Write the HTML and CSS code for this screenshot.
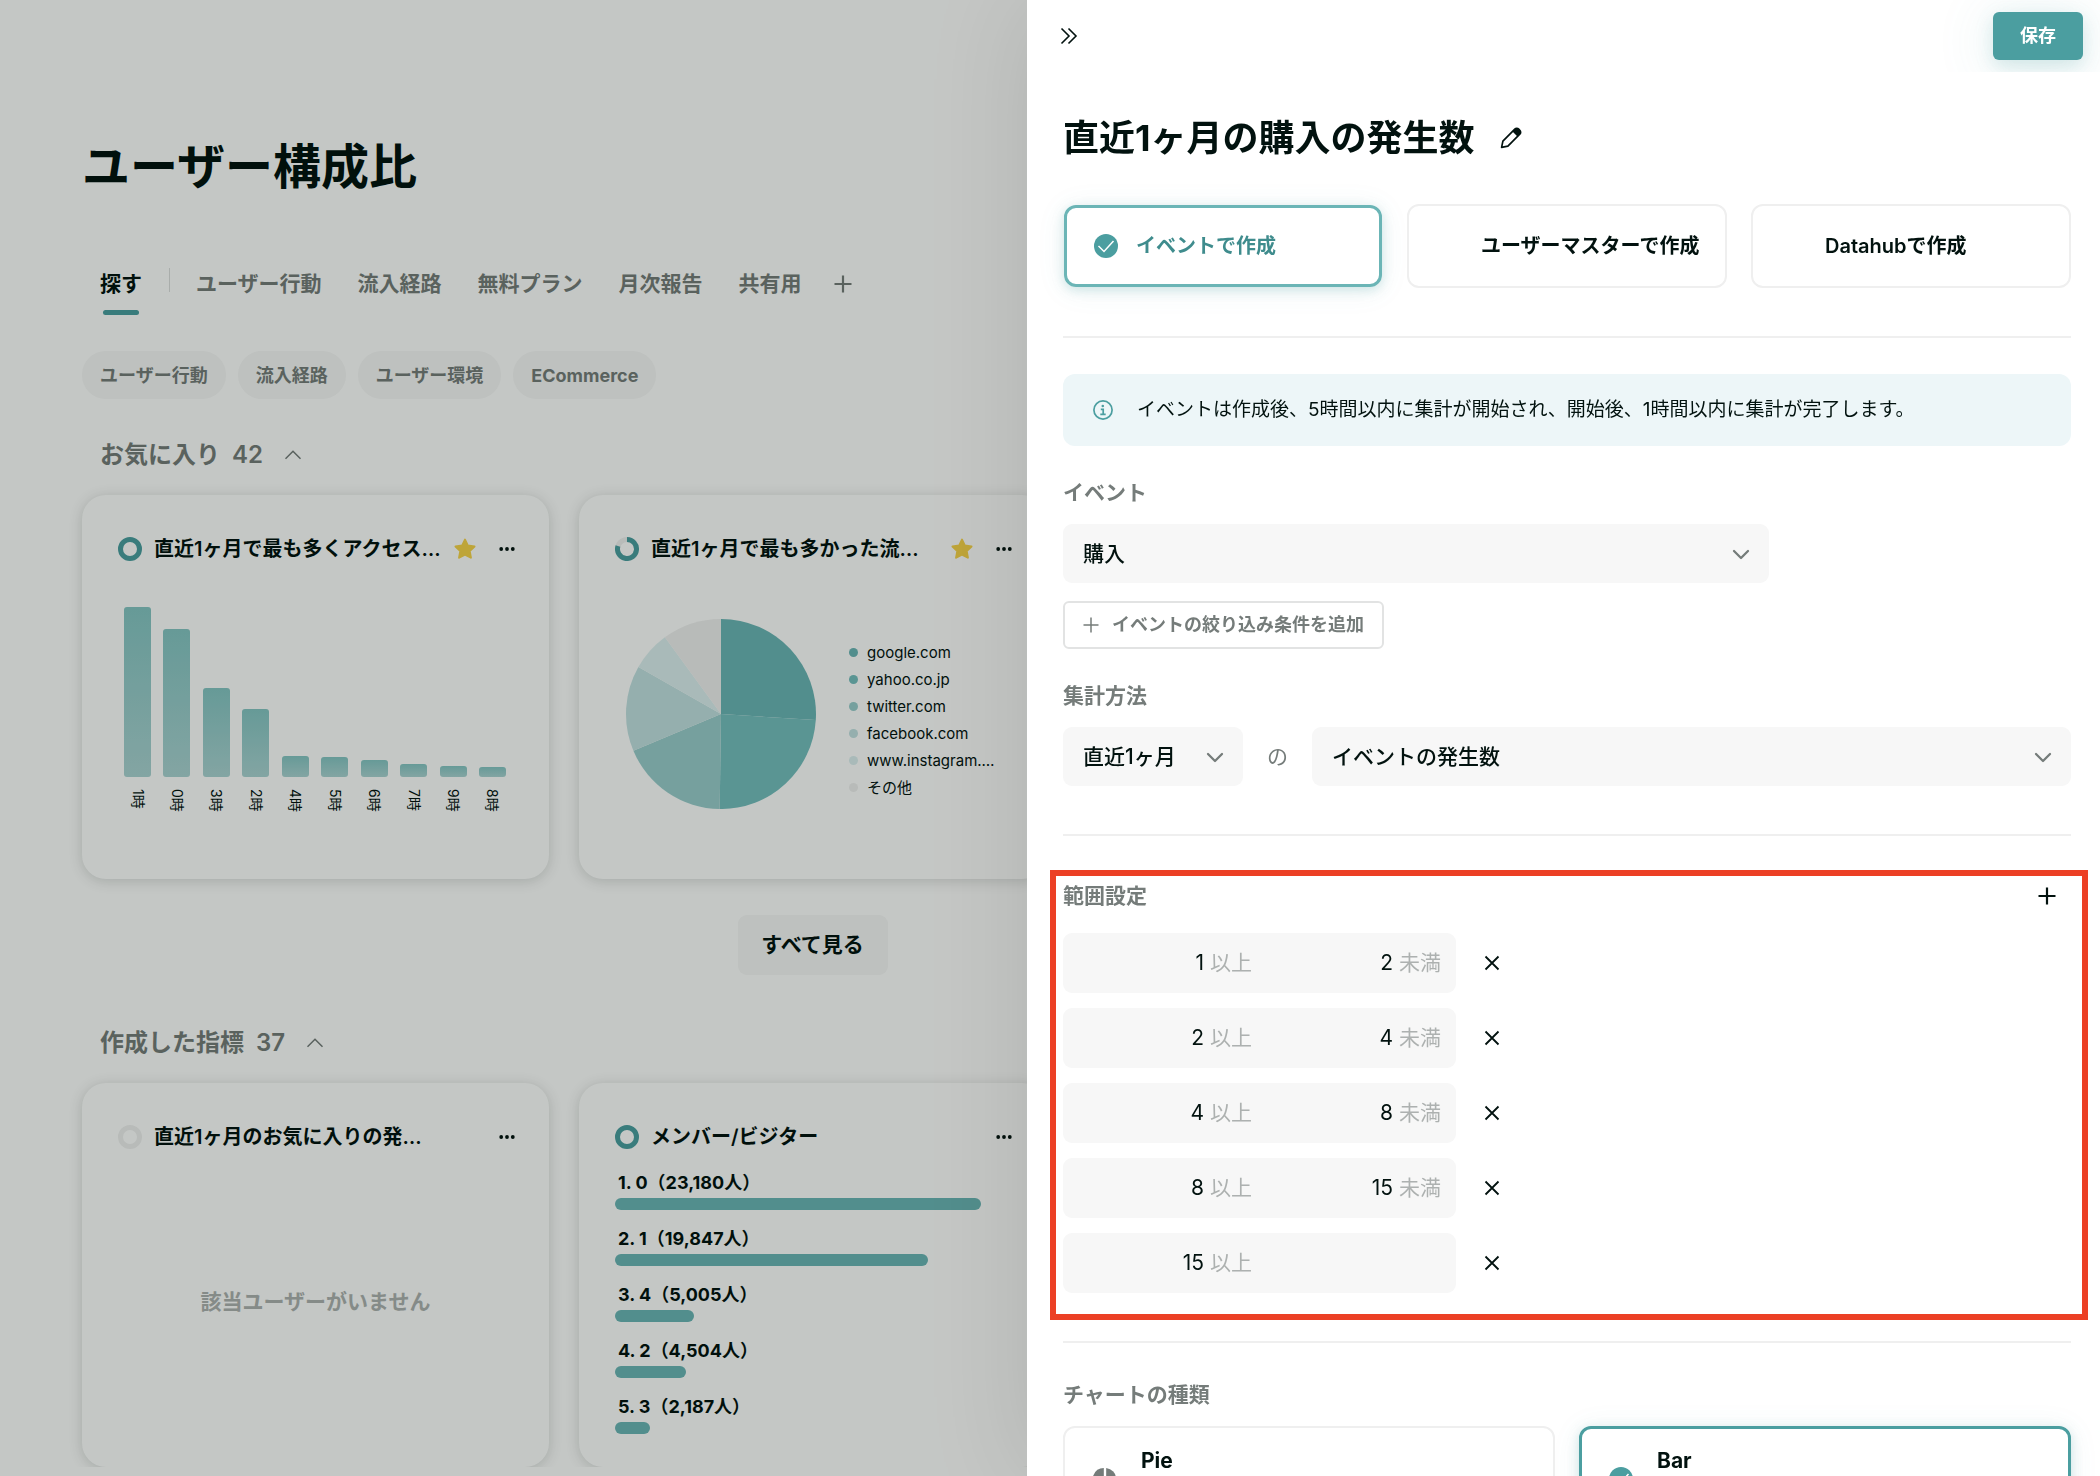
FILE: index.html
```html
<!DOCTYPE html>
<html lang="ja">
<head>
<meta charset="utf-8">
<meta name="viewport" content="width=device-width, initial-scale=1">
<title>ユーザー構成比</title>
<link rel="stylesheet" href="styles.css">
</head>
<body>
<svg class="sprite" aria-hidden="true">
  <symbol id="i-up" viewBox="0 0 24 24"><path d="M4.500 15.800 12 8.300l7.500 7.500" fill="none" stroke="currentColor" stroke-width="1.500"/></symbol>
  <symbol id="i-down" viewBox="0 0 24 24"><path d="M5 9l7 7 7-7" fill="none" stroke="currentColor" stroke-width="2.300" stroke-linecap="round" stroke-linejoin="round"/></symbol>
  <symbol id="i-plus" viewBox="0 0 24 24"><path d="M12 3.500v17M3.500 12h17" fill="none" stroke="currentColor" stroke-width="2.200"/></symbol>
  <symbol id="i-plus-thin" viewBox="0 0 24 24"><path d="M12 4.500v15M4.500 12h15" fill="none" stroke="currentColor" stroke-width="1.500"/></symbol>
  <symbol id="i-close" viewBox="0 0 24 24"><path d="M5.500 5.500l13 13M18.500 5.500l-13 13" fill="none" stroke="currentColor" stroke-width="1.800"/></symbol>
  <symbol id="i-star" viewBox="0 0 24 24"><path d="M12 2.600l2.900 6 6.600.9-4.800 4.600 1.200 6.600L12 17.500l-5.900 3.200 1.200-6.600L2.500 9.500l6.600-.9z" fill="currentColor" stroke="currentColor" stroke-width="2" stroke-linejoin="round"/></symbol>
  <symbol id="i-more" viewBox="0 0 24 24"><g fill="currentColor"><circle cx="6.200" cy="12" r="1.900"/><circle cx="12" cy="12" r="1.900"/><circle cx="17.800" cy="12" r="1.900"/></g></symbol>
  <symbol id="i-check" viewBox="0 0 24 24"><circle cx="12" cy="12" r="12" fill="#4b9ea0"/><path d="M4.500 12l5.500 5.500L19.500 7" fill="none" stroke="#fff" stroke-width="1.500"/></symbol>
</svg>

<main class="page">
  <h1 class="page__title">ユーザー構成比</h1>

  <nav class="tabs">
    <a class="tab tab--active" href="#">探す</a>
    <span class="tabs__divider"></span>
    <div class="tabs__group">
      <a class="tab" href="#">ユーザー行動</a>
      <a class="tab" href="#">流入経路</a>
      <a class="tab" href="#">無料プラン</a>
      <a class="tab" href="#">月次報告</a>
      <a class="tab" href="#">共有用</a>
    </div>
    <button class="icon-button tabs__add" type="button"><svg class="icon"><use href="#i-plus"/></svg></button>
  </nav>

  <div class="chips">
    <button class="chip" type="button">ユーザー行動</button>
    <button class="chip" type="button">流入経路</button>
    <button class="chip" type="button">ユーザー環境</button>
    <button class="chip" type="button">ECommerce</button>
  </div>

  <section class="section">
    <h2 class="section__title"><span>お気に入り</span><span>42</span><svg class="icon section__toggle"><use href="#i-up"/></svg></h2>
    <div class="cards">
      <article class="card">
        <header class="card__header">
          <svg class="icon" viewBox="0 0 24 24"><circle cx="12" cy="12" r="9.500" fill="none" stroke="#4b9ea0" stroke-width="5"/></svg>
          <h3 class="card__title">直近1ヶ月で最も多くアクセス…</h3>
          <button class="icon-button icon-button--star" type="button"><svg class="icon"><use href="#i-star"/></svg></button>
          <button class="icon-button" type="button"><svg class="icon"><use href="#i-more"/></svg></button>
        </header>
        <ol class="bars">
          <li class="bars__item"><span class="bars__bar" style="height:170px"></span><span class="bars__label">1時</span></li>
          <li class="bars__item"><span class="bars__bar" style="height:148px"></span><span class="bars__label">0時</span></li>
          <li class="bars__item"><span class="bars__bar" style="height:89px"></span><span class="bars__label">3時</span></li>
          <li class="bars__item"><span class="bars__bar" style="height:68px"></span><span class="bars__label">2時</span></li>
          <li class="bars__item"><span class="bars__bar" style="height:21px"></span><span class="bars__label">4時</span></li>
          <li class="bars__item"><span class="bars__bar" style="height:20px"></span><span class="bars__label">5時</span></li>
          <li class="bars__item"><span class="bars__bar" style="height:17px"></span><span class="bars__label">6時</span></li>
          <li class="bars__item"><span class="bars__bar" style="height:13px"></span><span class="bars__label">7時</span></li>
          <li class="bars__item"><span class="bars__bar" style="height:11px"></span><span class="bars__label">9時</span></li>
          <li class="bars__item"><span class="bars__bar" style="height:10px"></span><span class="bars__label">8時</span></li>
        </ol>
      </article>

      <article class="card">
        <header class="card__header">
          <svg class="icon" viewBox="0 0 24 24"><circle cx="12" cy="12" r="9.500" fill="none" stroke="#f0f0f0" stroke-width="5"/><path d="M12 2.500A9.500 9.500 0 1 1 2.960 9.060" fill="none" stroke="#4b9ea0" stroke-width="5"/></svg>
          <h3 class="card__title">直近1ヶ月で最も多かった流…</h3>
          <button class="icon-button icon-button--star" type="button"><svg class="icon"><use href="#i-star"/></svg></button>
          <button class="icon-button" type="button"><svg class="icon"><use href="#i-more"/></svg></button>
        </header>
        <div class="pie">
          <svg class="pie__chart" viewBox="0 0 190 190">
            <path fill="#6bb5b6" d="M95 95V0A95 95 0 0 1 189.800 101.100z"/>
            <path fill="#75bebf" d="M95 95L189.800 101.100A95 95 0 0 1 93.700 190z"/>
            <path fill="#9acdcd" d="M95 95L93.700 190A95 95 0 0 1 7.400 131.700z"/>
            <path fill="#c2e0e1" d="M95 95L7.400 131.700A95 95 0 0 1 12.400 48.100z"/>
            <path fill="#dceff0" d="M95 95L12.400 48.100A95 95 0 0 1 38.900 18.300z"/>
            <path fill="#f0f0f0" d="M95 95L38.900 18.300A95 95 0 0 1 95 0z"/>
          </svg>
          <ul class="legend">
            <li class="legend__item legend__item--1"><span class="legend__text">google.com</span></li>
            <li class="legend__item legend__item--2"><span class="legend__text">yahoo.co.jp</span></li>
            <li class="legend__item legend__item--3"><span class="legend__text">twitter.com</span></li>
            <li class="legend__item legend__item--4"><span class="legend__text">facebook.com</span></li>
            <li class="legend__item legend__item--5"><span class="legend__text">www.instagram.…</span></li>
            <li class="legend__item legend__item--6"><span class="legend__text">その他</span></li>
          </ul>
        </div>
      </article>
    </div>
    <button class="show-all" type="button">すべて見る</button>
  </section>

  <section class="section section--created">
    <h2 class="section__title"><span>作成した指標</span><span>37</span><svg class="icon section__toggle"><use href="#i-up"/></svg></h2>
    <div class="cards">
      <article class="card">
        <header class="card__header">
          <svg class="icon" viewBox="0 0 24 24"><circle cx="12" cy="12" r="9.500" fill="none" stroke="#f0f0f0" stroke-width="5"/></svg>
          <h3 class="card__title">直近1ヶ月のお気に入りの発…</h3>
          <button class="icon-button" type="button"><svg class="icon"><use href="#i-more"/></svg></button>
        </header>
        <p class="card__empty">該当ユーザーがいません</p>
      </article>

      <article class="card">
        <header class="card__header">
          <svg class="icon" viewBox="0 0 24 24"><circle cx="12" cy="12" r="9.500" fill="none" stroke="#4b9ea0" stroke-width="5"/></svg>
          <h3 class="card__title">メンバー/ビジター</h3>
          <button class="icon-button" type="button"><svg class="icon"><use href="#i-more"/></svg></button>
        </header>
        <ul class="ranking">
          <li class="ranking__item"><span class="ranking__label">1. 0（23,180人）</span><span class="ranking__bar" style="width:366px"></span></li>
          <li class="ranking__item"><span class="ranking__label">2. 1（19,847人）</span><span class="ranking__bar" style="width:313px"></span></li>
          <li class="ranking__item"><span class="ranking__label">3. 4（5,005人）</span><span class="ranking__bar" style="width:79px"></span></li>
          <li class="ranking__item"><span class="ranking__label">4. 2（4,504人）</span><span class="ranking__bar" style="width:71px"></span></li>
          <li class="ranking__item"><span class="ranking__label">5. 3（2,187人）</span><span class="ranking__bar" style="width:35px"></span></li>
        </ul>
      </article>
    </div>
  </section>
</main>

<div class="mask"></div>

<aside class="panel">
  <header class="panel__header">
    <button class="icon-button" type="button"><svg class="icon" viewBox="0 0 24 24"><path d="M4.500 4.500l7.500 7.500-7.500 7.500M11.500 4.500l7.500 7.500-7.500 7.500" fill="none" stroke="currentColor" stroke-width="1.600"/></svg></button>
    <button class="save" type="submit" form="metric">保存</button>
  </header>

  <form class="panel__body" id="metric">
    <div class="heading">
      <h2 class="heading__text">直近1ヶ月の購入の発生数</h2>
      <button class="icon-button" type="button"><svg class="icon" viewBox="0 0 24 24"><path d="M2.600 21.400l1.300-6.300L15.800 3.200a2.700 2.700 0 0 1 3.900 0l1.100 1.100a2.700 2.700 0 0 1 0 3.900L8.900 20.100z" fill="none" stroke="currentColor" stroke-width="1.700" stroke-linejoin="round"/><path d="M13.500 5.500l2.600-2.600c1-1 2.700-1 3.700 0l1.300 1.300c1 1 1 2.700 0 3.700l-2.600 2.600z" fill="currentColor"/></svg></button>
    </div>

    <div class="sources">
      <label class="option option--selected"><input class="option__input" type="radio" name="source" checked><svg class="icon"><use href="#i-check"/></svg><span>イベントで作成</span></label>
      <label class="option"><input class="option__input" type="radio" name="source"><span class="option__blank"></span><span>ユーザーマスターで作成</span></label>
      <label class="option"><input class="option__input" type="radio" name="source"><span class="option__blank"></span><span>Datahubで作成</span></label>
    </div>

    <hr class="rule">

    <p class="notice">
      <svg class="notice__icon" viewBox="0 0 20 20"><circle cx="10" cy="10" r="9.100" fill="none" stroke="currentColor" stroke-width="1.700"/><circle cx="9.800" cy="6" r="1.300" fill="currentColor"/><path d="M7.800 9.300h2.400v5M7.300 14.400h5.400" fill="none" stroke="currentColor" stroke-width="1.700"/></svg>
      <span>イベントは作成後、5時間以内に集計が開始され、開始後、1時間以内に集計が完了します。</span>
    </p>

    <label class="label" for="event">イベント</label>
    <div class="select select--event">
      <select class="select__field" id="event"><option>購入</option></select>
      <svg class="icon select__arrow"><use href="#i-down"/></svg>
    </div>
    <button class="add-filter" type="button"><svg class="icon"><use href="#i-plus-thin"/></svg>イベントの絞り込み条件を追加</button>

    <label class="label" for="period">集計方法</label>
    <div class="method">
      <div class="select select--period">
        <select class="select__field" id="period"><option>直近1ヶ月</option></select>
        <svg class="icon select__arrow"><use href="#i-down"/></svg>
      </div>
      <label class="method__joint" for="measure">の</label>
      <div class="select select--measure">
        <select class="select__field" id="measure"><option>イベントの発生数</option></select>
        <svg class="icon select__arrow"><use href="#i-down"/></svg>
      </div>
    </div>

    <hr class="rule">

    <section class="ranges">
      <div class="ranges__header">
        <h3 class="label label--inline">範囲設定</h3>
        <button class="icon-button" type="button"><svg class="icon"><use href="#i-plus"/></svg></button>
      </div>
      <div class="ranges__list">
        <div class="range">
          <div class="range__box">
            <label class="range__bound"><input class="range__input" type="text" inputmode="numeric" value="1">以上</label>
            <label class="range__bound"><input class="range__input" type="text" inputmode="numeric" value="2">未満</label>
          </div>
          <button class="icon-button" type="button"><svg class="icon"><use href="#i-close"/></svg></button>
        </div>
        <div class="range">
          <div class="range__box">
            <label class="range__bound"><input class="range__input" type="text" inputmode="numeric" value="2">以上</label>
            <label class="range__bound"><input class="range__input" type="text" inputmode="numeric" value="4">未満</label>
          </div>
          <button class="icon-button" type="button"><svg class="icon"><use href="#i-close"/></svg></button>
        </div>
        <div class="range">
          <div class="range__box">
            <label class="range__bound"><input class="range__input" type="text" inputmode="numeric" value="4">以上</label>
            <label class="range__bound"><input class="range__input" type="text" inputmode="numeric" value="8">未満</label>
          </div>
          <button class="icon-button" type="button"><svg class="icon"><use href="#i-close"/></svg></button>
        </div>
        <div class="range">
          <div class="range__box">
            <label class="range__bound"><input class="range__input" type="text" inputmode="numeric" value="8">以上</label>
            <label class="range__bound"><input class="range__input" type="text" inputmode="numeric" value="15">未満</label>
          </div>
          <button class="icon-button" type="button"><svg class="icon"><use href="#i-close"/></svg></button>
        </div>
        <div class="range">
          <div class="range__box">
            <label class="range__bound"><input class="range__input" type="text" inputmode="numeric" value="15">以上</label>
          </div>
          <button class="icon-button" type="button"><svg class="icon"><use href="#i-close"/></svg></button>
        </div>
      </div>
    </section>

    <hr class="rule rule--ranges">

    <h3 class="label label--chart">チャートの種類</h3>
    <div class="charts">
      <label class="chart"><input class="option__input" type="radio" name="chart"><svg class="icon chart__icon" viewBox="0 0 24 24"><path d="M10.800 1v11.500l-8 8A11.500 11.500 0 0 1 10.800 1z" fill="currentColor"/><path d="M13.200 1a11 11 0 0 1 9.800 11H13.200z" fill="currentColor"/><path d="M4.500 22l8.300-7.600H23A11.500 11.500 0 0 1 4.500 22z" fill="currentColor"/></svg><span class="chart__name">Pie</span></label>
      <label class="chart chart--selected"><input class="option__input" type="radio" name="chart" checked><svg class="icon chart__icon"><use href="#i-check"/></svg><span class="chart__name">Bar</span></label>
    </div>
  </form>
</aside>
</body>
</html>
```

FILE: styles.css
```css
:root {
  --ink: #02120f;
  --gray: #757c7a;
  --light: #adb1b0;
  --line: #efefef;
  --fill: #f7f7f7;
  --teal: #4b9ea0;
  --teal-soft: #6bb5b6;
}

* {
  box-sizing: border-box;
}

body {
  margin: 0;
  background: #fff;
  color: var(--ink);
  font-family: Inter, "Noto Sans CJK JP", sans-serif;
  font-size: 21px;
  line-height: 30px;
}

h1, h2, h3, p, ul, ol {
  margin: 0;
  padding: 0;
  font-weight: 600;
  list-style: none;
}

button, select, input {
  border: 0;
  margin: 0;
  padding: 0;
  background: none;
  color: inherit;
  font: inherit;
}

.sprite {
  position: absolute;
  width: 0;
  height: 0;
}

.icon {
  display: block;
  flex: none;
  width: 24px;
  height: 24px;
}

.icon-button {
  flex: none;
  width: 24px;
  height: 24px;
}

.icon-button--star {
  color: #f7d34a;
}

/* Page behind the panel */

.page {
  max-width: 1543px;
  padding: 137px 0 0 82px;
}

.page__title {
  font-size: 48px;
  font-weight: 700;
  line-height: 60px;
}

.tabs {
  display: flex;
  align-items: flex-start;
  gap: 27px;
  margin-top: 71px;
  padding-left: 18px;
  color: var(--gray);
}

.tabs__group {
  display: flex;
  gap: 36px;
  margin: 0 2px 0 -1px;
}

.tabs__divider {
  width: 1px;
  height: 24px;
  background: #dcdedd;
}

.tabs__add {
  margin-top: 4px;
}

.tab {
  display: flex;
  flex-direction: column;
  align-items: center;
  gap: 10px;
  color: inherit;
  font-weight: 600;
  line-height: 32px;
  text-decoration: none;
}

.tab--active {
  color: var(--ink);
}

.tab--active::after {
  content: "";
  width: 36px;
  height: 5px;
  border-radius: 3px;
  background: var(--teal);
}

.chips {
  display: flex;
  gap: 12px;
  margin-top: 36px;
}

.chip {
  height: 48px;
  padding: 2px 18px 0;
  border-radius: 24px;
  background: var(--fill);
  color: var(--gray);
  font-size: 18px;
  font-weight: 700;
}

.section {
  display: flex;
  flex-direction: column;
  margin-top: 38px;
}

.section--created {
  margin-top: 50px;
}

.section__title {
  display: flex;
  align-items: center;
  gap: 12px;
  padding-left: 18px;
  color: var(--gray);
  font-size: 24px;
  line-height: 36px;
}

.section__toggle {
  margin-left: 6px;
}

.cards {
  display: grid;
  grid-template-columns: repeat(3, minmax(0, 1fr));
  gap: 30px;
  margin-top: 22px;
}

.card {
  display: flex;
  flex-direction: column;
  min-height: 384px;
  padding: 42px 30px 24px 36px;
  border-radius: 24px;
  background: #fff;
  box-shadow: 0 2px 14px rgba(2, 18, 15, 0.16);
}

.card__header {
  display: flex;
  align-items: center;
  gap: 18px;
}

.card__title {
  flex: 1;
  min-width: 0;
  margin-left: -6px;
  font-size: 20px;
  line-height: 24px;
  white-space: nowrap;
}

.card__empty {
  margin: 138px 6px 0 0;
  color: var(--light);
  text-align: center;
}

.bars {
  display: flex;
  align-items: flex-end;
  justify-content: space-between;
  margin-top: 46px;
  padding: 0 13px 0 6px;
}

.bars__item {
  display: flex;
  flex-direction: column;
  align-items: center;
  gap: 12px;
  width: 27px;
}

.bars__bar {
  width: 100%;
  border-radius: 3px;
  background: linear-gradient(#86c5c4, #abd3d3);
}

.bars__label {
  height: 24px;
  font-size: 14px;
  font-weight: 400;
  line-height: 16px;
  text-orientation: sideways;
  white-space: nowrap;
  writing-mode: vertical-rl;
}

.pie {
  display: flex;
  align-items: flex-start;
  gap: 33px;
  margin: 58px 0 0 11px;
}

.pie__chart {
  flex: none;
  width: 190px;
  height: 190px;
}

.legend {
  margin-top: 20px;
}

.legend__item {
  display: flex;
  align-items: center;
  gap: 9px;
  height: 27px;
}

.legend__item::before {
  content: "";
  width: 9px;
  height: 9px;
  border-radius: 50%;
  background: currentColor;
}

.legend__item--1 { color: #6bb5b6; }
.legend__item--2 { color: #75bebf; }
.legend__item--3 { color: #9acdcd; }
.legend__item--4 { color: #c2e0e1; }
.legend__item--5 { color: #dceff0; }
.legend__item--6 { color: #f0f0f0; }

.legend__text {
  color: var(--ink);
  font-size: 15px;
  font-weight: 400;
  line-height: 24px;
}

.show-all {
  align-self: center;
  width: 150px;
  height: 60px;
  margin-top: 36px;
  border-radius: 9px;
  background: var(--fill);
  font-weight: 600;
}

.ranking {
  display: grid;
  gap: 14px;
  margin-top: 19px;
}

.ranking__item {
  display: flex;
  flex-direction: column;
}

.ranking__label {
  padding-left: 3px;
  font-size: 18px;
  font-weight: 700;
}

.ranking__bar {
  height: 12px;
  border-radius: 6px;
  background: var(--teal-soft);
}

.mask {
  position: fixed;
  inset: 0;
  background: rgba(0, 12, 6, 0.232);
}

/* Side panel */

.panel {
  position: fixed;
  inset: 0 0 0 1027px;
  overflow: hidden;
  background: #fff;
  box-shadow: 0 0 100px rgba(2, 18, 15, 0.11);
}

.panel__header {
  display: flex;
  align-items: center;
  justify-content: space-between;
  height: 72px;
  padding: 0 17px 0 30px;
  overflow: hidden;
}

.save {
  width: 90px;
  height: 48px;
  border-radius: 6px;
  background: var(--teal);
  box-shadow: 0 6px 18px rgba(75, 158, 160, 0.2), 0 6px 60px rgba(75, 158, 160, 0.16);
  color: #fff;
  font-size: 18px;
  font-weight: 700;
}

.panel__body {
  padding: 42px 29px 0 36px;
}

.heading {
  display: flex;
  align-items: center;
  gap: 24px;
}

.heading__text {
  font-size: 36px;
  font-weight: 700;
  line-height: 48px;
}

.sources {
  display: grid;
  grid-template-columns: repeat(3, 1fr);
  gap: 24px;
  margin-top: 42px;
}

.option {
  position: relative;
  display: flex;
  align-items: center;
  gap: 18px;
  min-height: 84px;
  padding-left: 30px;
  border: 2px solid var(--line);
  border-radius: 12px;
  font-size: 20px;
  font-weight: 600;
}

.option--selected {
  min-height: 82px;
  margin: 1px;
  padding-left: 27px;
  border: 3px solid var(--teal-soft);
  box-shadow: 0 3px 12px rgba(75, 158, 160, 0.25), 0 3px 30px rgba(75, 158, 160, 0.08);
  color: #3f8c8d;
}

.option__input {
  position: absolute;
  opacity: 0;
}

.option__blank {
  width: 24px;
}

.rule {
  height: 2px;
  margin: 48px 0 0;
  border: 0;
  background: var(--line);
}

.rule--ranges {
  margin-top: 21px;
}

.notice {
  display: flex;
  align-items: center;
  gap: 24px;
  min-height: 72px;
  margin-top: 36px;
  padding: 0 30px;
  border-radius: 12px;
  background: #edf6f8;
  font-size: 19px;
  font-weight: 400;
}

.notice__icon {
  flex: none;
  width: 20px;
  height: 20px;
  color: var(--teal);
}

.label {
  display: block;
  margin-top: 32px;
  color: var(--gray);
  font-size: 21px;
  font-weight: 600;
}

.label--inline {
  margin-top: 0;
}

.label--chart {
  margin-top: 37px;
}

.select {
  position: relative;
}

.select--event {
  width: 70%;
  margin-top: 16px;
}

.select--period {
  width: 180px;
}

.select--measure {
  flex: 1;
}

.select__field {
  display: block;
  width: 100%;
  height: 59px;
  padding: 0 48px 0 20px;
  border-radius: 9px;
  background: var(--fill);
  font-weight: 500;
  appearance: none;
}

.select__arrow {
  position: absolute;
  top: 18px;
  right: 16px;
  color: var(--gray);
  pointer-events: none;
}

.add-filter {
  display: flex;
  align-items: center;
  gap: 9px;
  height: 48px;
  margin-top: 18px;
  padding: 0 18px 0 14px;
  border: 2px solid #e2e3e3;
  border-radius: 6px;
  color: var(--gray);
  font-size: 18px;
  font-weight: 600;
}

.method {
  display: flex;
  align-items: center;
  margin-top: 16px;
}

.method__joint {
  width: 69px;
  color: var(--gray);
  text-align: center;
}

.ranges {
  margin: 34px -17px 0 -13px;
  padding: 5px 11px 21px 7px;
  border: 6px solid #ec4025;
}

.ranges__header {
  display: flex;
  align-items: center;
  justify-content: space-between;
  padding-right: 12px;
}

.ranges__list {
  display: grid;
  gap: 15px;
  margin-top: 22px;
}

.range {
  display: flex;
  align-items: center;
  gap: 24px;
}

.range__box {
  display: grid;
  grid-template-columns: repeat(2, minmax(0, 1fr));
  width: 393px;
  height: 60px;
  padding-right: 15px;
  border-radius: 9px;
  background: var(--fill);
}

.range__bound {
  display: flex;
  align-items: center;
  gap: 6px;
  color: var(--light);
}

.range__input {
  flex: 1;
  min-width: 0;
  color: var(--ink);
  text-align: right;
}

.charts {
  display: grid;
  grid-template-columns: 1fr 1fr;
  gap: 24px;
  margin-top: 16px;
}

.chart {
  position: relative;
  display: flex;
  align-items: flex-start;
  gap: 24px;
  height: 106px;
  padding: 18px 28px;
  border: 2px solid var(--line);
  border-radius: 12px;
}

.chart--selected {
  padding: 17px 27px;
  border: 3px solid var(--teal);
  box-shadow: 0 3px 12px rgba(75, 158, 160, 0.25), 0 3px 30px rgba(75, 158, 160, 0.08);
}

.chart__icon {
  margin-top: 21px;
  color: var(--gray);
}

.chart__name {
  font-weight: 700;
}
```
